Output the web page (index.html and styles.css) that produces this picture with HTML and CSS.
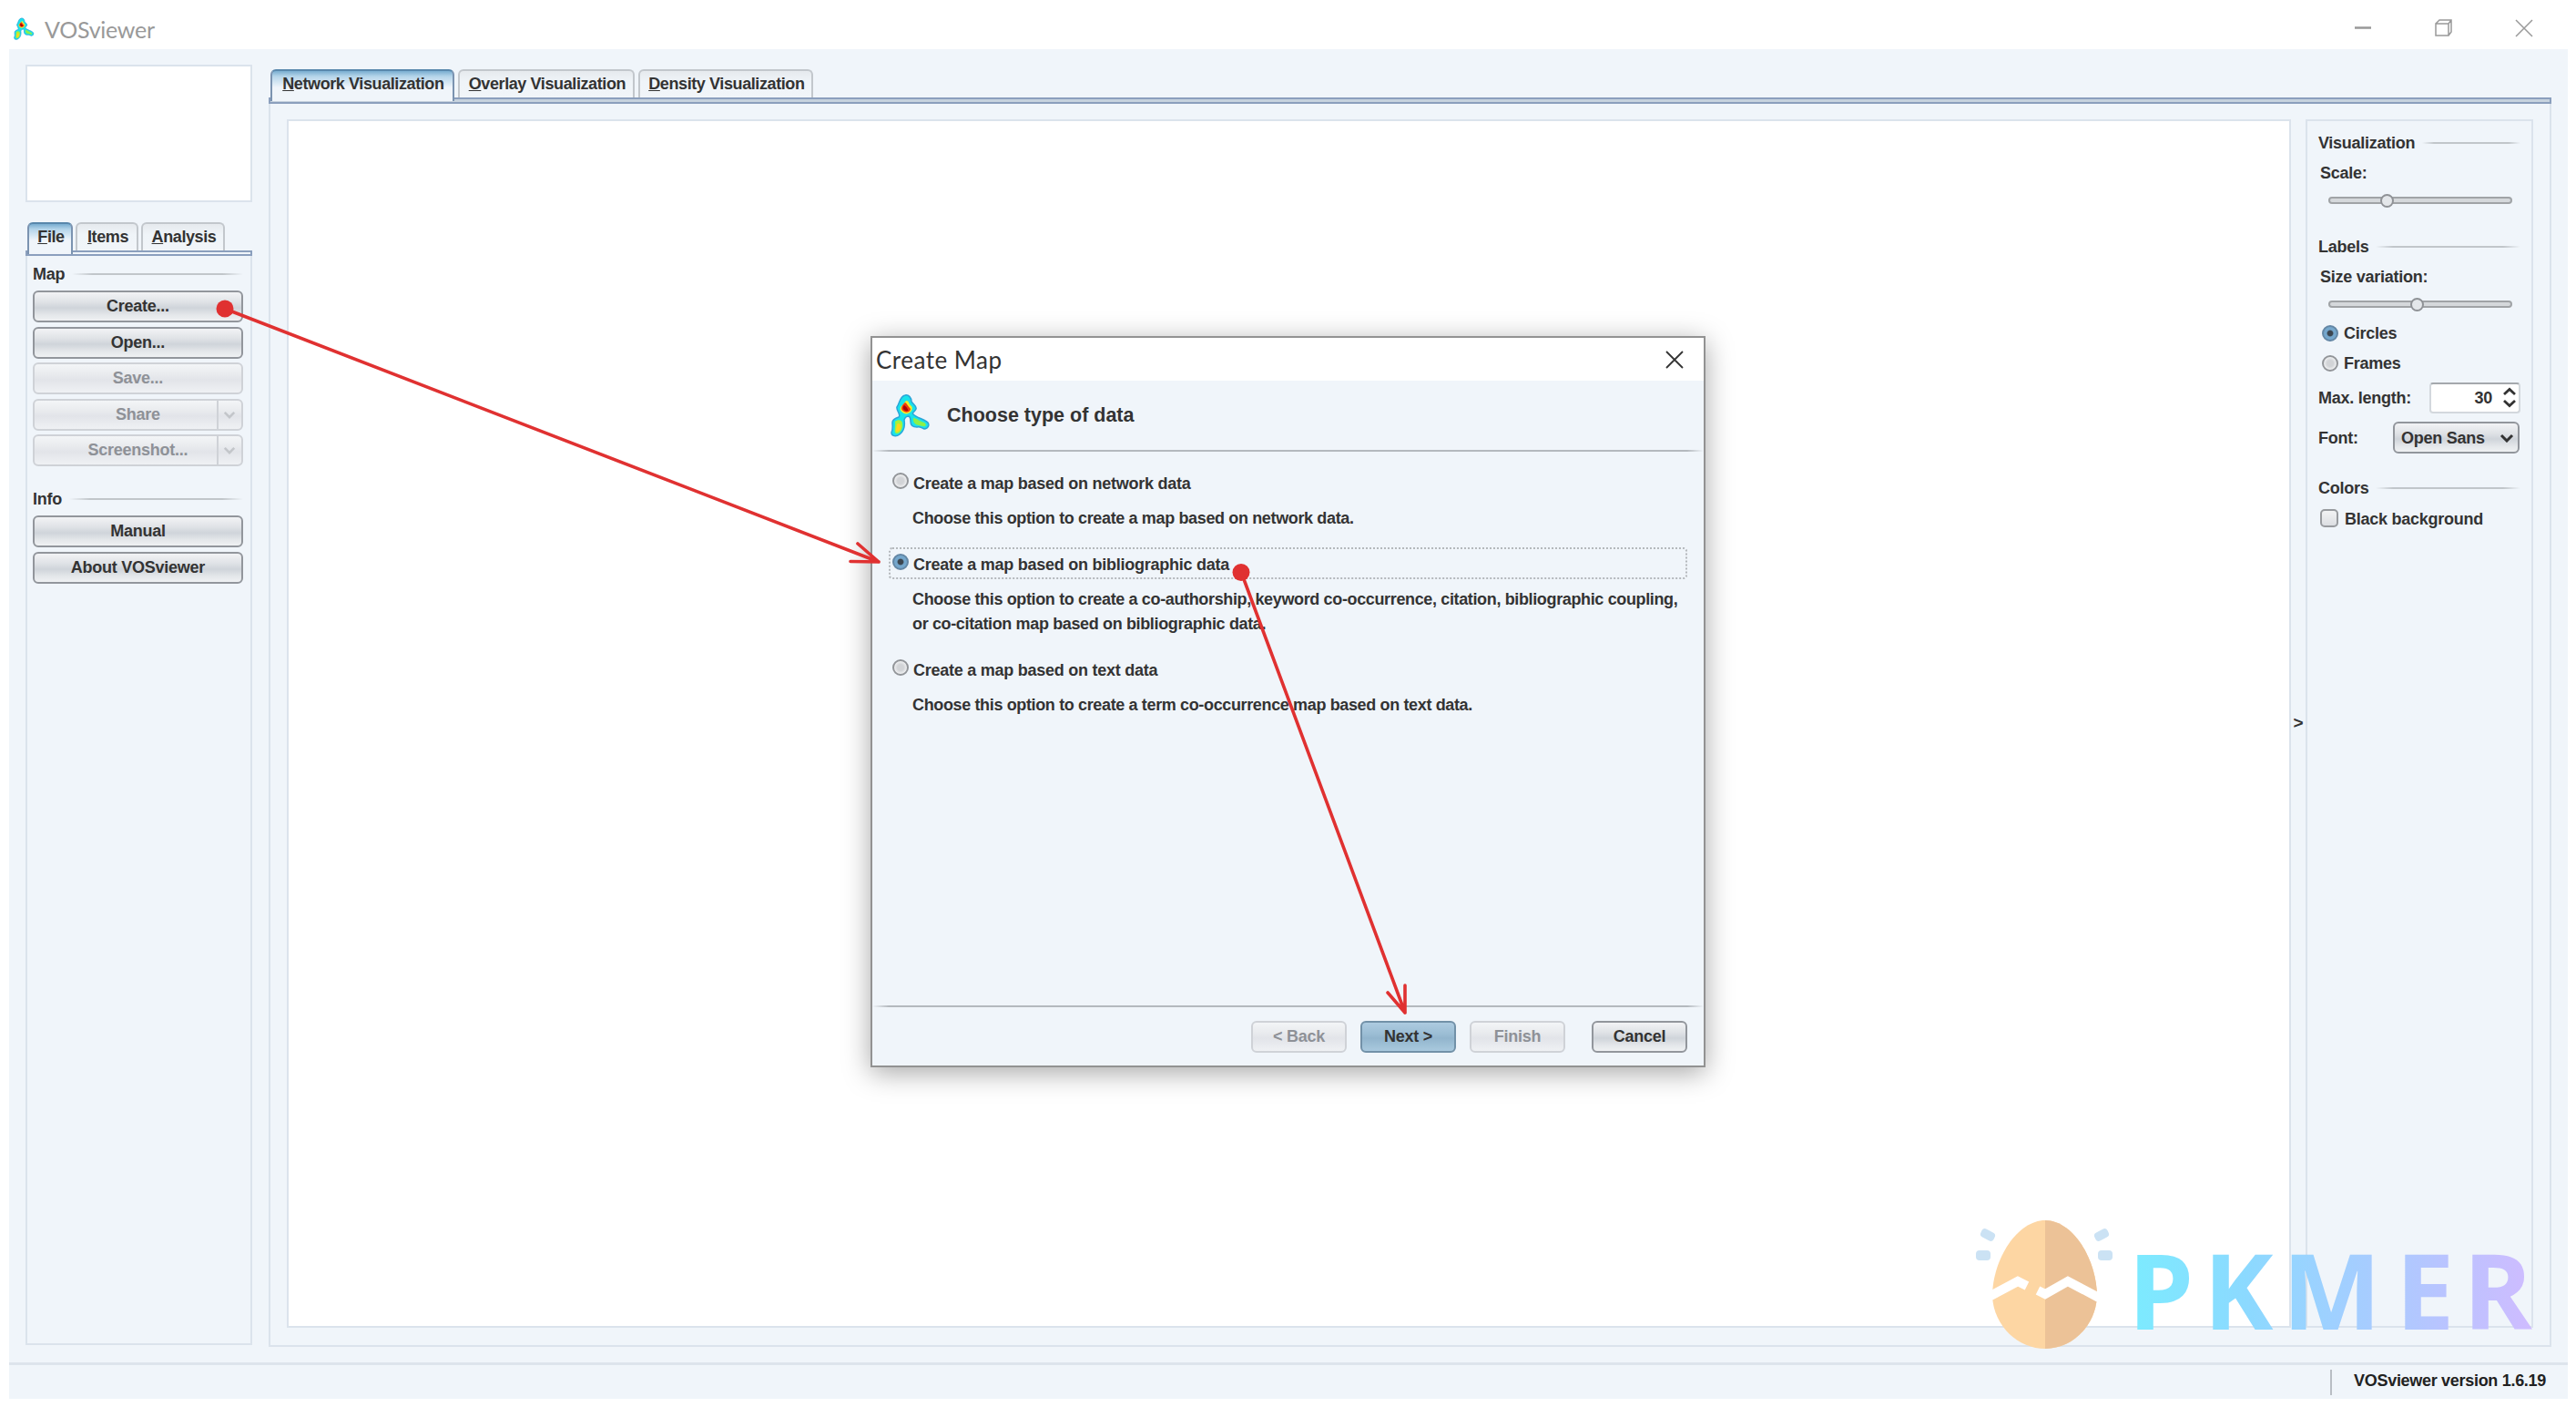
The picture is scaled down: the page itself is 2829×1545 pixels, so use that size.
FILE: index.html
```html
<!DOCTYPE html>
<html lang="en">
<head>
    <meta charset="UTF-8">
    <meta name="viewport" content="width=device-width, initial-scale=1.0">
    <title>VOSviewer</title>
    <link rel="stylesheet" href="styles.css">
</head>
<body>
    <!-- logo, used in the title bar and in the dialog -->
    <svg class="defs" width="0" height="0">
        <symbol id="logo" viewBox="-1 -1 44 48">
            <path d="M15 1C19 0 22 4 22 8C24 11 28 13 27 16C26 19 22 20 24 22C28 26 36 27 40 31C42 34 40 38 36 38C33 37 31 35 28 36C24 36 21 34 21 30C21 27 21 25 19 24C17 24 15 25 14 28C15 34 14 40 9 44C5 47 0 46 0 42C2 38 1 34 1 31C1 27 5 26 8 25C11 22 5 18 6 14C9 10 9 2 15 1Z" fill="#19e3ea" stroke="#2aa5d8" stroke-width="1.5"/>
            <path d="M16 7C20 7 18 10 22 13C25 17 19 23 14 21C8 18 9 14 12 12Z" fill="#f3ef2a"/>
            <path d="M15 9C17 10 18 13 21 16C21 19 16 21 14 19C9 17 11 12 15 9Z" fill="#ee3a10"/>
            <path d="M14 12C16 13 19 17 18 18C14 19 11 15 14 12Z" fill="#a80505"/>
            <path d="M4 30C7 27 12 28 12 32C13 38 9 44 5 43C2 41 5 36 4 30Z" fill="#a5f23c"/>
            <path d="M6 33C9 30 11 35 10 38C8 42 4 42 5 39Z" fill="#ffd51c"/>
            <path d="M24 26C28 26 31 30 36 31C39 33 38 36 35 35C30 34 23 34 24 26Z" fill="#8df04a"/>
        </symbol>
        <symbol id="arrow-down" viewBox="0 0 16 10">
            <path d="M2 2L8 8L14 2" fill="none" stroke="currentColor" stroke-width="3"/>
        </symbol>
    </svg>

    <div class="titlebar">
        <svg class="title-logo"><use href="#logo"/></svg>
        <span class="title-text">VOSviewer</span>
        <svg class="win-buttons" width="190" height="20" viewBox="0 0 190 20">
            <path d="M0 9.500H18" stroke-width="2.500"/>
            <path d="M89 5H103V18H89ZM89 5L93 1H106V14L103 18M103 5L106 1"/>
            <path d="M177 1L195 19M195 1L177 19"/>
        </svg>
    </div>

    <div class="app">
        <div class="workspace">
            <div class="sidebar">
                <div class="overview"></div>
                <div class="tabs side-tabs">
                    <div class="tab active tab-file"><u>F</u>ile</div>
                    <div class="tab tab-items"><u>I</u>tems</div>
                    <div class="tab tab-analysis"><u>A</u>nalysis</div>
                </div>
                <div class="strip"></div>
                <div class="side-pane">
                    <div class="heading">Map</div>
                    <div class="button">Create...</div>
                    <div class="button">Open...</div>
                    <div class="button disabled">Save...</div>
                    <div class="button disabled split">Share<span class="drop"><svg width="14" height="9"><use href="#arrow-down"/></svg></span></div>
                    <div class="button disabled split">Screenshot...<span class="drop"><svg width="14" height="9"><use href="#arrow-down"/></svg></span></div>
                    <div class="heading info">Info</div>
                    <div class="button">Manual</div>
                    <div class="button">About VOSviewer</div>
                </div>
            </div>

            <div class="main">
                <div class="tabs main-tabs">
                    <div class="tab active tab-network"><u>N</u>etwork Visualization</div>
                    <div class="tab tab-overlay"><u>O</u>verlay Visualization</div>
                    <div class="tab tab-density"><u>D</u>ensity Visualization</div>
                </div>
                <div class="strip wide"></div>
                <div class="main-pane">
                    <div class="canvas"></div>
                    <div class="splitter">&gt;</div>
                    <div class="options">
                        <div class="heading">Visualization</div>
                        <div class="row label">Scale:</div>
                        <div class="slider scale"><div class="thumb"></div></div>
                        <div class="heading labels">Labels</div>
                        <div class="row label">Size variation:</div>
                        <div class="slider variation"><div class="thumb"></div></div>
                        <div class="row circles"><span class="radio checked"></span>Circles</div>
                        <div class="row frames"><span class="radio"></span>Frames</div>
                        <div class="row field">Max. length:
                            <div class="spinner">30
                                <svg width="16" height="24" viewBox="0 0 16 24"><path d="M2 8L8 2.500L14 8M2 15L8 20.500L14 15" fill="none" stroke="#333" stroke-width="2.800"/></svg>
                            </div>
                        </div>
                        <div class="row field font">Font:
                            <div class="combo">Open Sans<svg width="16" height="10"><use href="#arrow-down"/></svg></div>
                        </div>
                        <div class="heading colors">Colors</div>
                        <div class="row black"><span class="checkbox"></span>Black background</div>
                    </div>
                </div>
            </div>
        </div>
        <div class="statusbar"><div class="version">VOSviewer version 1.6.19</div></div>
    </div>

    <div class="dialog">
        <div class="dialog-title">
            <span>Create Map</span>
            <svg width="20" height="20" viewBox="0 0 20 20"><path d="M1 1L19 19M19 1L1 19" stroke="#333" stroke-width="1.800"/></svg>
        </div>
        <div class="dialog-header">
            <svg class="dialog-logo"><use href="#logo"/></svg>
            Choose type of data
        </div>
        <div class="rule"></div>
        <div class="choices">
            <div class="choice"><span class="radio"></span><span>Create a map based on network data</span></div>
            <p>Choose this option to create a map based on network data.</p>
            <div class="choice focused"><span class="radio checked"></span><span>Create a map based on bibliographic data</span></div>
            <p>Choose this option to create a co-authorship, keyword co-occurrence, citation, bibliographic coupling,<br>or co-citation map based on bibliographic data.</p>
            <div class="choice"><span class="radio"></span><span>Create a map based on text data</span></div>
            <p>Choose this option to create a term co-occurrence map based on text data.</p>
        </div>
        <div class="rule"></div>
        <div class="dialog-buttons">
            <div class="button disabled">&lt; Back</div>
            <div class="button default">Next &gt;</div>
            <div class="button disabled">Finish</div>
            <div class="button cancel">Cancel</div>
        </div>
    </div>

    <!-- arrows and watermark lie over the whole window -->
    <svg class="overlay" width="2829" height="1545" viewBox="0 0 2829 1545">
        <defs>
            <linearGradient id="brand" gradientUnits="userSpaceOnUse" x1="2347" y1="0" x2="2781" y2="0">
                <stop offset="0" stop-color="#7deaff"/>
                <stop offset="0.280" stop-color="#8cd9ff"/>
                <stop offset="0.600" stop-color="#a8ccff"/>
                <stop offset="0.820" stop-color="#bdc2ff"/>
                <stop offset="1" stop-color="#cfbcff"/>
            </linearGradient>
        </defs>
        <g class="arrows">
            <circle cx="247" cy="339" r="9.500"/>
            <path d="M247 339L965 617M942 597L965 617L934 616.500"/>
            <circle cx="1363" cy="628.500" r="9.500"/>
            <path d="M1363 628L1543 1112M1524 1090L1543 1112L1543 1082"/>
        </g>
        <g class="watermark">
            <path class="egg" d="M2246 1340C2216 1340 2188 1382 2188 1424C2190 1457 2217 1481 2246 1481C2275 1481 2301 1457 2303 1424C2303 1382 2276 1340 2246 1340Z"/>
            <path class="egg-shade" d="M2246 1340C2276 1340 2303 1382 2303 1424C2301 1457 2275 1481 2246 1481Z"/>
            <path class="crack" d="M2186 1423L2216 1407L2226 1412M2238 1417L2246 1421L2271 1407L2305 1425"/>
            <g class="drops">
                <rect x="2175" y="1351" width="16" height="10" rx="4" transform="rotate(28 2183 1356)"/>
                <rect x="2170" y="1373" width="16" height="11" rx="4"/>
                <rect x="2300" y="1351" width="16" height="10" rx="4" transform="rotate(-28 2308 1356)"/>
                <rect x="2304" y="1373" width="16" height="11" rx="4"/>
            </g>
            <text class="brand" x="2337 2420 2506.500 2631 2705" y="1460">PKMER</text>
        </g>
    </svg>
</body>
</html>
```
FILE: styles.css
```css
* {
    box-sizing: border-box;
}
body {
    margin: 0;
    width: 2829px;
    height: 1545px;
    overflow: hidden;
    background: #fff;
    color: #333;
    font: bold 18px/24px "Liberation Sans", Arial, sans-serif;
    letter-spacing: -0.25px;
    white-space: nowrap;
}
.defs {
    position: absolute;
}

/* title bar */
.titlebar {
    height: 54px;
    padding: 8px 53px 0 15px;
    display: flex;
    align-items: center;
}
.title-logo {
    width: 23px;
    height: 25px;
}
.title-text {
    margin: 2px 0 0 11px;
    font: 25px/40px Lato, sans-serif;
    color: #999;
}
.win-buttons {
    margin-left: auto;
    overflow: visible;
    fill: none;
    stroke: #999;
    stroke-width: 1.5;
}

/* main window */
.app {
    margin-left: 10px;
    width: 2810px;
    height: 1482px;
    background: #f0f5fa;
    display: flex;
    flex-direction: column;
}
.workspace {
    display: flex;
    height: 1425px;
    padding: 17px 18px 0 18px;
}
.sidebar {
    width: 249px;
    margin-right: 18px;
}
.overview {
    height: 151px;
    background: #fff;
    border: 2px solid #dbe3ec;
}
.tabs {
    display: flex;
    height: 31px;
    padding-left: 2px;
}
.side-tabs {
    margin-top: 22px;
    gap: 3px;
}
.main-tabs {
    margin-top: 5px;
    gap: 4px;
}
.tab {
    padding-left: 2px;
    border: 2px solid #c2c7cc;
    border-bottom: 0;
    border-radius: 6px 6px 0 0;
    background: linear-gradient(#e6eaee, #eff4f8 40%, #f1f5f9);
    text-align: center;
    line-height: 28px;
    letter-spacing: -0.4px;
}
.tab.active {
    position: relative;
    height: 35px;
    z-index: 1;
    border-color: #7b93b0;
    border-top-color: #5887ac;
    background: linear-gradient(#79add0, #b5d5ea 18%, #f0f5fa 55%);
}
.tab-file { width: 50px; }
.tab-items { width: 69px; }
.tab-analysis { width: 92px; }
.tab-network { width: 202px; }
.tab-overlay { width: 194px; }
.tab-density { width: 192px; }
.strip {
    height: 6px;
    border: 2px solid #8b9fbd;
    background: #f0f5fa;
}
.strip.wide {
    height: 7px;
    background: #c6d2de;
}
.side-pane {
    height: 1196px;
    padding: 8px 8px 0 6px;
    border: 2px solid #dbe3ec;
    border-top: 0;
}
.heading {
    display: flex;
    align-items: center;
    height: 24px;
}
.heading::after {
    content: "";
    flex: 1;
    height: 2px;
    margin-left: 8px;
    background: linear-gradient(90deg, transparent, #c1c6ca 12%, #c1c6ca 88%, transparent);
}
.button {
    height: 35px;
    border: 2px solid #92969c;
    border-radius: 6px;
    background: linear-gradient(#f2f3f5, #dfe2e6 35%, #cfd4da 55%, #e4e7ea 80%, #eff1f3);
    text-align: center;
    line-height: 30px;
}
.side-pane .button {
    margin-top: 4.600px;
}
.side-pane .heading + .button {
    margin-top: 6px;
}
.button.disabled {
    border-color: #cfd2d7;
    background: linear-gradient(#f3f5f7, #e9ebee 35%, #e2e4e9 55%, #eff1f4);
    color: #8e9197;
}
.split {
    display: flex;
    justify-content: center;
    position: relative;
}
/* drop-down half of a split button */
.drop {
    position: absolute;
    right: 0;
    top: 0;
    width: 27px;
    height: 31px;
    border-left: 2px solid #cfd2d7;
    display: flex;
    align-items: center;
    justify-content: center;
    color: #c3c6ca;
}
.info {
    margin-top: 24px;
}

/* visualization pane */
.main {
    width: 2508px;
}
.main-pane {
    display: flex;
    height: 1365px;
    padding: 17px 18px 0 18px;
    border: 2px solid #dbe3ec;
    border-top: 0;
}
.canvas {
    width: 2201px;
    height: 1327px;
    background: #fff;
    border: 2px solid #dbe3ec;
}
.splitter {
    width: 16px;
    padding-top: 651px;
    text-align: center;
    font-size: 19px;
}
.options {
    width: 250px;
    height: 1327px;
    padding: 12px 12px 0 12px;
    border: 2px solid #dbe3ec;
    display: flex;
    flex-direction: column;
}
.row {
    display: flex;
    align-items: center;
    height: 24px;
}
.label {
    margin: 9px 0 0 2px;
}
.slider {
    width: 202px;
    height: 8px;
    margin: 14px 0 6px 11px;
    border: 2px solid #a0a3a6;
    border-radius: 4px;
    background: #d5d8db;
    display: flex;
    align-items: center;
}
.thumb {
    flex: none;
    width: 15px;
    height: 15px;
    border: 2px solid #8f9296;
    border-radius: 50%;
    background: #e4e7ea;
}
.scale .thumb { margin-left: 55px; }
.variation .thumb { margin-left: 88px; }
.labels { margin-top: 29px; }
.circles { margin-top: 10px; }
.frames { margin-top: 9px; }
.radio {
    flex: none;
    width: 18px;
    height: 18px;
    border: 2px solid #929599;
    border-radius: 50%;
    background: radial-gradient(#d2d4d7 35%, #f4f5f6 75%);
}
.radio.checked {
    border-color: #6487a5;
    background: radial-gradient(#3c4650 28%, #75a7cc 40%);
}
.row .radio {
    margin: 0 6px 0 4px;
}
.field {
    height: 34px;
    margin-top: 9px;
    justify-content: space-between;
}
.spinner {
    width: 100px;
    height: 34px;
    padding-right: 2px;
    border: 2px solid #d3d8dd;
    border-top-color: #a4a8ad;
    border-radius: 4px;
    background: #fff;
    display: flex;
    align-items: center;
    justify-content: flex-end;
    gap: 11px;
}
.font {
    height: 35px;
}
.combo {
    width: 139px;
    height: 35px;
    margin-right: 1px;
    padding: 0 4px 0 7px;
    border: 2px solid #92969c;
    border-radius: 6px;
    background: linear-gradient(#f2f3f5, #dfe2e6 35%, #cfd4da 55%, #e4e7ea 80%, #eff1f3);
    display: flex;
    align-items: center;
    justify-content: space-between;
}
.colors { margin-top: 26px; }
.black { margin-top: 10px; }
.checkbox {
    width: 20px;
    height: 20px;
    margin: -3px 7px 0 2px;
    border: 2px solid #989b9f;
    border-radius: 5px;
    background: linear-gradient(#f2f3f4, #dcdee2);
}

/* status bar */
.statusbar {
    height: 57px;
    border-top: 3px solid #dde4ec;
    display: flex;
    justify-content: flex-end;
    color: #222;
    margin-top: 17px;
}
.version {
    height: 28px;
    margin: 5px 24px 0 0;
    padding-left: 24px;
    border-left: 2px solid #b9bec4;
    line-height: 25px;
    letter-spacing: -0.3px;
}

/* create map dialog */
.dialog {
    position: absolute;
    left: 956px;
    top: 369px;
    width: 917px;
    height: 803px;
    border: 2px solid #929292;
    background: #f0f5fa;
    box-shadow: 0 6px 28px rgba(0, 0, 0, 0.35);
    display: flex;
    flex-direction: column;
}
.dialog-title {
    height: 47px;
    padding: 0 22px 0 4px;
    background: #fff;
    display: flex;
    align-items: center;
    justify-content: space-between;
    font: 26px/40px Lato, sans-serif;
    letter-spacing: 0.5px;
}
.dialog-header {
    height: 76px;
    padding-left: 20px;
    display: flex;
    align-items: center;
    font-size: 21.500px;
    letter-spacing: 0;
}
.dialog-logo {
    width: 44px;
    height: 48px;
    margin-right: 18px;
}
.rule {
    height: 2px;
    background: linear-gradient(90deg, transparent, #b4b9be 2%, #b4b9be 98%, transparent);
}
.choices {
    height: 608px;
    padding: 16px 18px 0 18px;
}
.choice {
    height: 35px;
    padding-left: 2px;
    border: 2px solid transparent;
    border-radius: 4px;
    display: flex;
    align-items: center;
    gap: 5px;
}
.choice .radio {
    margin-top: -3px;
}
.choice span + span {
    padding-top: 2px;
}
.choice.focused {
    border: 2px dotted #b4b8bc;
}
.choices p {
    margin: 9px 0 18px 26px;
    line-height: 27px;
    letter-spacing: -0.36px;
}
.dialog-buttons {
    display: flex;
    justify-content: flex-end;
    gap: 15px;
    padding: 15px 18px 0 0;
}
.dialog-buttons .button {
    width: 105px;
}
.dialog-buttons .cancel {
    margin-left: 14px;
}
.button.default {
    border-color: #7291a8;
    background: linear-gradient(#adcbe0, #9bbdd4 40%, #92b5cd 55%, #a9c9de);
}

/* layer on top */
.overlay {
    position: absolute;
    left: 0;
    top: 0;
}
.arrows {
    fill: #e03131;
    stroke-linecap: round;
    stroke-linejoin: round;
}
.arrows path {
    fill: none;
    stroke: #e03131;
    stroke-width: 3.6;
}
.egg {
    fill: #fdd6a3;
}
.egg-shade {
    fill: #ecc297;
}
.crack {
    fill: none;
    stroke: #fff;
    stroke-width: 10;
}
.drops {
    fill: #cbe2f4;
}
.brand {
    font: bold 115px "Open Sans", sans-serif;
    fill: url(#brand);
}
```
